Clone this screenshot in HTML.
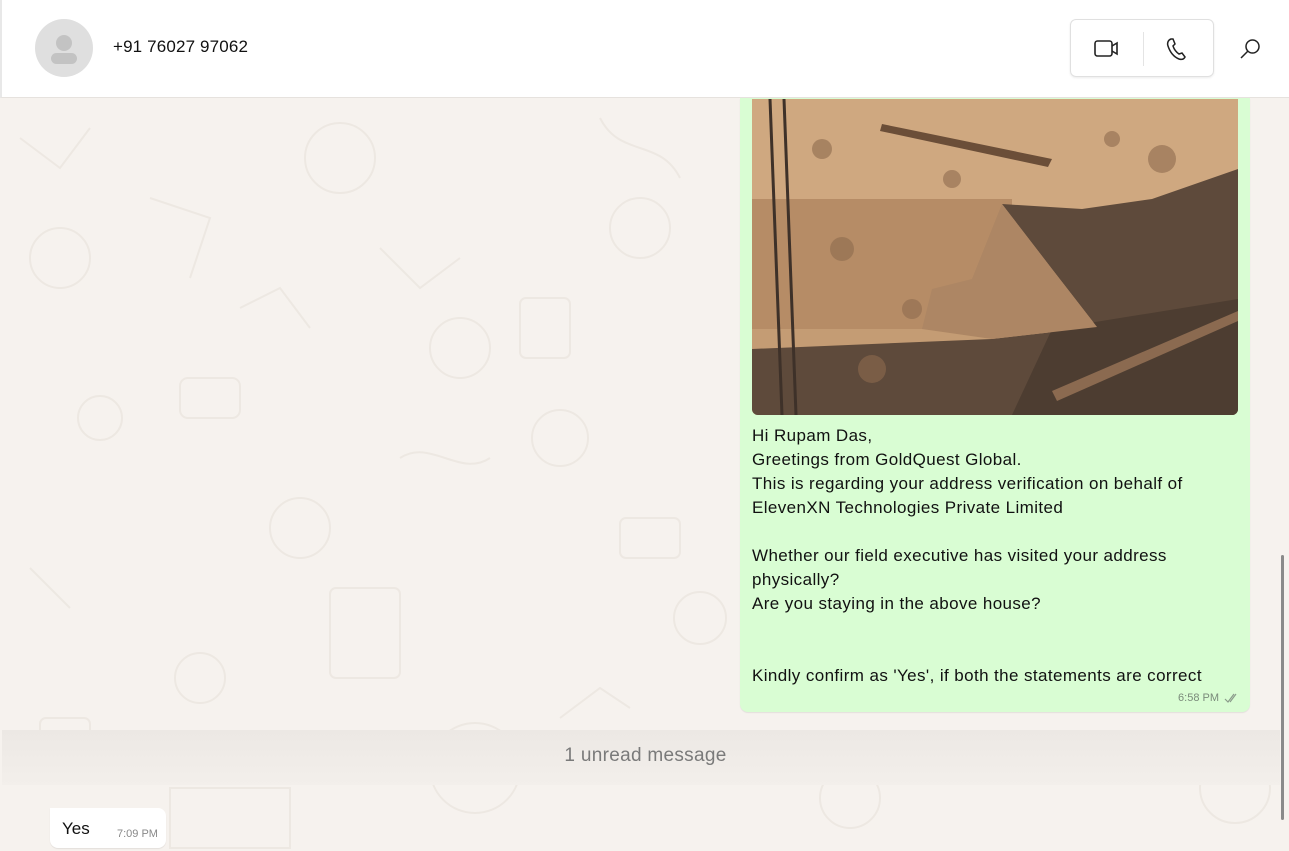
<!DOCTYPE html>
<html><head><meta charset="utf-8"><style>
*{margin:0;padding:0;box-sizing:border-box}
body{width:1289px;height:851px;overflow:hidden;background:#f6f2ee;font-family:"Liberation Sans",sans-serif;position:relative}
.hdr{position:absolute;left:0;top:0;width:1289px;height:98px;background:#fff;border-bottom:1px solid #e6e2de;border-left:2px solid #e8e8e8}
.av{position:absolute;left:33px;top:19px;width:58px;height:58px;border-radius:50%;background:#dfdfdf}
.name{position:absolute;left:111px;top:37px;font-size:17px;color:#111;letter-spacing:.15px}
.calls{position:absolute;left:1068px;top:19px;width:144px;height:58px;border:1px solid #e0e0e0;border-radius:6px;box-shadow:0 1px 2px rgba(0,0,0,.08)}
.sep{position:absolute;left:72px;top:12px;width:1px;height:34px;background:#e4e4e4}
.bub{position:absolute;left:740px;top:98px;width:510px;height:614px;background:#d9fdd3;border-radius:0 0 8px 8px;box-shadow:0 1px 1px rgba(0,0,0,.08)}
.img{position:absolute;left:12px;top:1px;width:486px;height:316px;border-radius:0 0 6px 6px;overflow:hidden}
.txt{position:absolute;left:12px;top:326px;font-size:17px;line-height:24px;color:#111;white-space:pre;letter-spacing:.4px}
.time{position:absolute;right:31px;bottom:8px;font-size:11px;color:#7a8a7a}
.band{position:absolute;left:2px;top:730px;width:1278px;height:55px;background:linear-gradient(#ece8e4,#f3efeb)}
.unread{position:absolute;left:0;width:1291px;top:745px;text-align:center;font-size:19px;color:#7a7a7a;letter-spacing:.3px}
.yes{position:absolute;left:50px;top:808px;width:116px;height:40px;background:#fff;border-radius:0 8px 8px 8px;box-shadow:0 1px 1px rgba(0,0,0,.08)}
.scroll{position:absolute;left:1281px;top:555px;width:3px;height:265px;background:#8a8a8a;border-radius:2px}
</style></head><body>
<svg style="position:absolute;left:0;top:98px" width="1289" height="753" opacity=".45">
<g fill="none" stroke="#e3dcd4" stroke-width="2">
<circle cx="60" cy="160" r="30"/><circle cx="340" cy="60" r="35"/><circle cx="460" cy="250" r="30"/><circle cx="300" cy="430" r="30"/><circle cx="475" cy="670" r="45"/><circle cx="560" cy="340" r="28"/><circle cx="200" cy="580" r="25"/><circle cx="640" cy="130" r="30"/><circle cx="100" cy="320" r="22"/><circle cx="700" cy="520" r="26"/><circle cx="1235" cy="690" r="35"/><circle cx="850" cy="700" r="30"/>
<rect x="180" y="280" width="60" height="40" rx="8"/><rect x="330" y="490" width="70" height="90" rx="6"/><rect x="40" y="620" width="50" height="40" rx="6"/><rect x="520" y="200" width="50" height="60" rx="6"/><rect x="620" y="420" width="60" height="40" rx="6"/><rect x="170" y="690" width="120" height="60"/>
<path d="M20 40l40 30 30-40M150 100l60 20-20 60M380 150l40 40 40-30M600 20c20 40 60 20 80 60M30 470l40 40M240 210l40-20 30 40M560 620l40-30 30 20M400 360c30-20 60 20 90 0"/>
</g></svg>
<div class="hdr"><div class="av"><svg width="58" height="58"><circle cx="29" cy="24" r="8" fill="#c3c3c3"/><rect x="16" y="34" width="26" height="11" rx="5.5" fill="#c3c3c3"/></svg></div>
<div class="name">+91 76027 97062</div>
<div class="calls"><svg style="position:absolute;left:22px;top:17px" width="28" height="24" fill="none" stroke="#222" stroke-width="1.6"><rect x="2" y="4" width="17" height="15" rx="2.5"/><path d="M19 9l5-3v11l-5-3"/></svg><div class="sep"></div>
<svg style="position:absolute;left:94px;top:16px" width="24" height="26" fill="none" stroke="#222" stroke-width="1.5"><path d="M6 3c-3 1-4 4-3 7 2 6 6 11 11 13 3 1 5 0 6-2l-3-4-3 1c-3-2-5-5-6-8l2-2-2-5z"/></svg></div>
<svg style="position:absolute;left:1237px;top:37px" width="24" height="24" fill="none" stroke="#222" stroke-width="1.5"><circle cx="13.5" cy="9.5" r="6.5"/><path d="M9 14l-7 7"/></svg>
</div>
<div class="bub">
<div class="img"><svg width="486" height="316">
<rect width="486" height="316" fill="#c49c74"/>
<rect width="486" height="110" fill="#cfa880"/>
<rect x="0" y="100" width="260" height="130" fill="#b68c66"/>
<polygon points="250,105 330,110 400,100 486,70 486,316 0,316 0,250 120,245 240,240 345,228 300,170" fill="#5e4a3b"/>
<polygon points="300,230 486,200 486,316 260,316" fill="#4d3d31"/>
<polygon points="180,190 220,180 250,105 300,170 345,228 240,240 170,230" fill="#ad8664"/>
<polygon points="300,292 486,212 486,222 305,302" fill="#8b6a50"/>
<polygon points="130,25 300,60 296,68 128,32" fill="#6b4e38"/>
<g stroke="#3e3129" stroke-width="3"><line x1="18" y1="0" x2="30" y2="316"/><line x1="32" y1="0" x2="44" y2="316"/></g>
<g fill="#8e6b4e" opacity=".6"><circle cx="90" cy="150" r="12"/><circle cx="160" cy="210" r="10"/><circle cx="120" cy="270" r="14"/><circle cx="70" cy="50" r="10"/><circle cx="410" cy="60" r="14"/><circle cx="200" cy="80" r="9"/><circle cx="360" cy="40" r="8"/></g>
</svg></div>
<div class="txt">Hi Rupam Das,
Greetings from GoldQuest Global.
This is regarding your address verification on behalf of
ElevenXN Technologies Private Limited

Whether our field executive has visited your address
physically?
Are you staying in the above house?


Kindly confirm as 'Yes', if both the statements are correct</div>
<div class="time">6:58 PM</div>
<svg style="position:absolute;right:10px;bottom:8px" width="16" height="12" fill="none" stroke="#8a9a8a" stroke-width="1.2"><path d="M1 7l3 3 6-8M6 10l6-8"/></svg>
</div>
<div class="band"></div>
<div class="unread">1 unread message</div>
<div class="yes"><span style="position:absolute;left:12px;top:11px;font-size:17px;color:#111">Yes</span><span style="position:absolute;left:67px;top:20px;font-size:11px;color:#888">7:09 PM</span></div>
<div class="scroll"></div>
</body></html>
